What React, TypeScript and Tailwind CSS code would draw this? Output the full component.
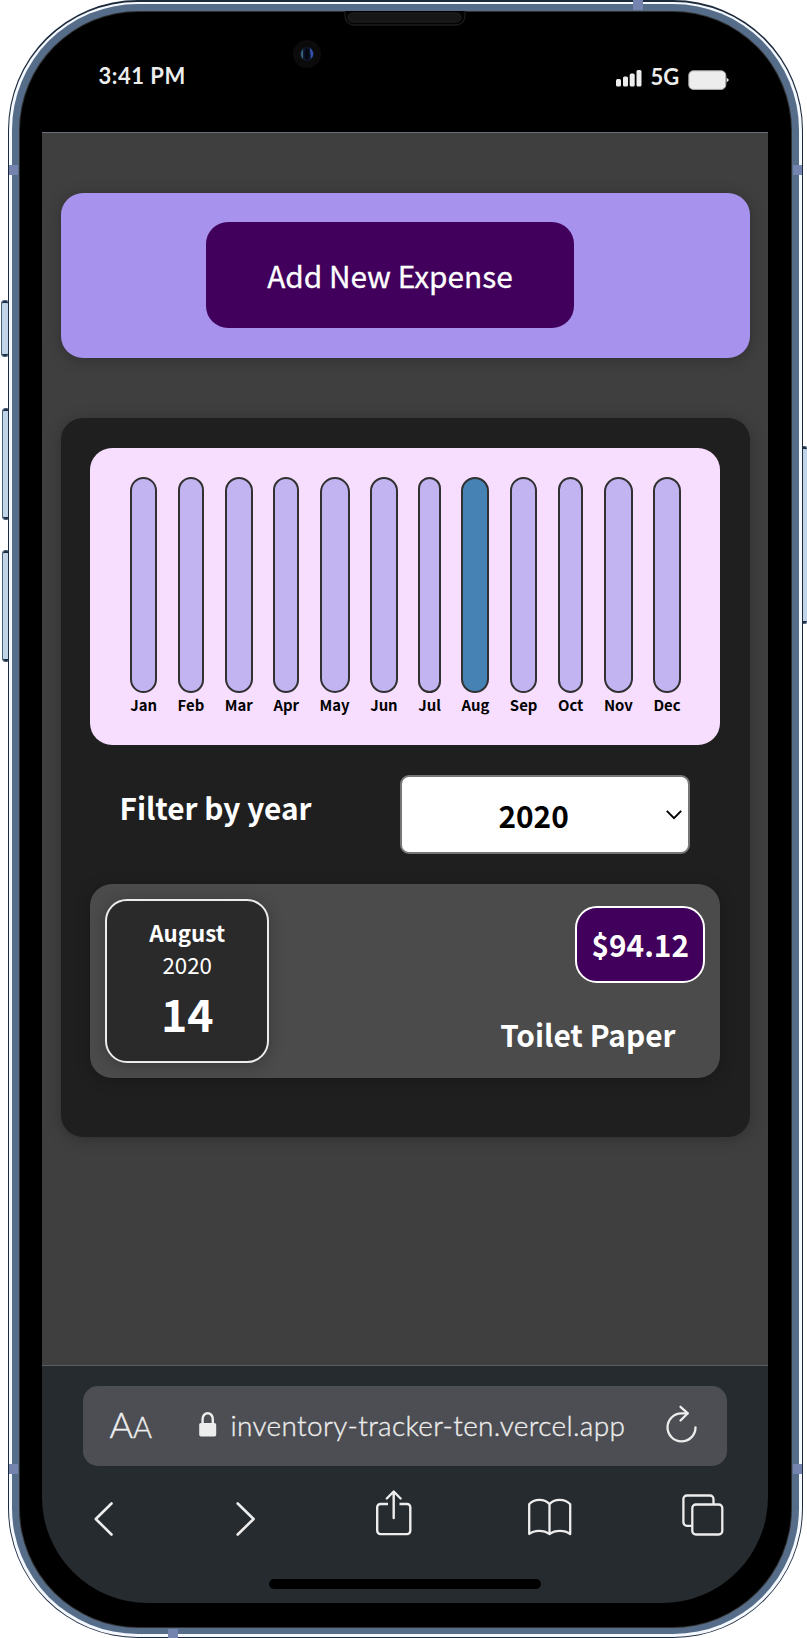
import React from "react";

const months = ["Jan", "Feb", "Mar", "Apr", "May", "Jun", "Jul", "Aug", "Sep", "Oct", "Nov", "Dec"];

function SideButton({ className }: { className: string }) {
  return (
    <div
      className={`absolute w-[8px] rounded-[3px] border-[1.5px] border-[#4a5f78] bg-[#c2d5e8] shadow-[inset_0_4px_0_-2px_#1d2d42,inset_0_-4px_0_-2px_#1d2d42] ${className}`}
    />
  );
}

function Antenna({ className }: { className: string }) {
  return <div className={`absolute bg-[#7484ae] ${className}`} />;
}

function StatusBar() {
  return (
    <div className="flex h-[120px] shrink-0 items-start justify-between pl-[56px] pr-[39px] font-['Lato','Liberation_Sans',sans-serif] text-[#ededed]">
      <div className="mt-[50px] whitespace-nowrap text-[22px] font-bold leading-[28px] tracking-[0.5px]">3:41 PM</div>
      <div className="mt-[50px] flex items-start">
        <svg width="26" height="17" viewBox="0 0 26 17" className="mt-[8px]" fill="#ededed">
          <rect x="0" y="9" width="5" height="7.5" rx="1.5" />
          <rect x="7" y="6.5" width="5" height="10" rx="1.5" />
          <rect x="13.7" y="3.5" width="5" height="13" rx="1.5" />
          <rect x="20.5" y="0" width="5" height="16.5" rx="1.5" />
        </svg>
        <div className="ml-[9px] mt-[1px] w-[29px] whitespace-nowrap text-[22px] font-bold leading-[28px]">5G</div>
        <svg width="41" height="21" viewBox="0 0 41 21" className="ml-[8px] mt-[8px]">
          <rect x="0.8" y="0.8" width="37" height="18.6" rx="4.5" fill="#ededed" stroke="#aaa" strokeWidth="1" />
          <path d="M38.6 7.5 L41 10 L38.6 12.6Z" fill="#ededed" />
        </svg>
      </div>
    </div>
  );
}

function Chart() {
  return (
    <div className="flex h-[297.5px] justify-between rounded-[22px] bg-[#f7deff] px-[39.8px] pt-[29.5px]">
      {months.map((m) => (
        <div key={m} className="flex flex-col items-center">
          <div
            className={`h-[216px] w-full rounded-[22px] border-2 border-[#313131] ${m === "Aug" ? "bg-[#4682b4]" : "bg-[#c2b3f1]"}`}
          />
          <div className="mt-[1px] text-[14.9px] font-bold leading-[22px] text-black">{m}</div>
        </div>
      ))}
    </div>
  );
}

function Filter() {
  return (
    <div className="mt-[30px] flex h-[79px] items-start justify-between pl-[29px] pr-[30px]">
      <div className="mt-[10px] text-[29.8px] font-bold leading-[44px] text-white">Filter by year</div>
      <div className="flex h-[79px] w-[290px] items-center rounded-[9px] border-2 border-[#767676] bg-white pr-[5px]">
        <div className="ml-[96px] text-[29.8px] font-bold leading-[44px] text-black">2020</div>
        <svg width="16" height="10" viewBox="0 0 16 10" className="ml-auto mr-[1px]" fill="none" stroke="#000" strokeWidth="1.9">
          <path d="M0.8 0.8 L8 8.2 L15.2 0.8" />
        </svg>
      </div>
    </div>
  );
}

function ExpenseItem() {
  return (
    <div className="mt-[30px] flex h-[193.5px] items-start justify-between rounded-[22px] bg-[#4b4b4b] p-[15px] shadow-[0_2px_15px_rgba(0,0,0,0.25)]">
      <div className="flex h-[163.5px] w-[163.5px] flex-col items-center rounded-[22px] border-2 border-[#ececec] bg-[#2a2a2a] text-white shadow-[0_2px_15px_rgba(0,0,0,0.25)]">
        <div className="mt-[15px] text-[22.3px] font-bold leading-[32px]">August</div>
        <div className="text-[22.3px] leading-[32px]">2020</div>
        <div className="mt-px text-[44.6px] font-bold leading-[64px]">14</div>
      </div>
      <div className="flex flex-col items-end">
        <div className="mt-[7px] flex h-[76.5px] w-[130.5px] items-center justify-center rounded-[22px] border-2 border-white bg-[#40005c] pb-px text-[29.8px] font-bold leading-[44px] text-white">
          $94.12
        </div>
        <div className="mr-[30px] mt-[29px] text-[29.8px] font-bold leading-[44px] text-white">Toilet Paper</div>
      </div>
    </div>
  );
}

function WebPage() {
  return (
    <div className="h-[1233px] shrink-0 overflow-hidden border-t border-[#6a707b] bg-[#3f3f3f] pl-[18.2px] pr-[17.3px] pt-[59.7px] font-['Noto_Sans_CJK_JP',sans-serif]">
      <div className="flex h-[165.5px] rounded-[22px] bg-[#a793ed] pl-[145px] pt-[29.7px] shadow-[0_2px_15px_rgba(0,0,0,0.25)]">
        <div className="flex h-[106px] w-[368.5px] items-center justify-center rounded-[22px] bg-[#40005c] text-[29.8px] leading-[44px] text-white [-webkit-text-stroke:0.3px_white]">
          Add New Expense
        </div>
      </div>
      <div className="mt-[59.5px] h-[719.5px] rounded-[22px] bg-[#1f1f1f] px-[29.8px] pt-[30px] shadow-[0_2px_15px_rgba(0,0,0,0.25)]">
        <Chart />
        <Filter />
        <ExpenseItem />
      </div>
    </div>
  );
}

function BrowserBar() {
  return (
    <div className="h-[238px] shrink-0 overflow-hidden rounded-b-[106px] border-t border-[#5a5e62] bg-[#262b2f] font-['Lato','Liberation_Sans',sans-serif] text-[#ededed]">
      <div className="ml-[41px] mt-[20px] flex h-[80px] w-[643.5px] items-start rounded-[15px] bg-[#4c4e53] pl-[26px]">
        <div className="mt-[14px] flex w-[46px] items-baseline whitespace-nowrap font-light leading-[48px] [-webkit-text-stroke:0.4px_#ededed]">
          <span className="text-[36px]">A</span>
          <span className="text-[29px]">A</span>
        </div>
        <svg width="18" height="25" viewBox="0 0 18 25" className="ml-[44px] mt-[26px]">
          <rect x="0.2" y="11" width="17" height="13.5" rx="1.8" fill="#ededed" />
          <path d="M3.6 12 V7 a5.1 5.8 0 0 1 10.2 0 V12" fill="none" stroke="#ededed" strokeWidth="2.4" />
        </svg>
        <div className="ml-[13px] mt-[21px] w-[395px] whitespace-nowrap text-[28px] font-light leading-[36px] tracking-[0.34px] [-webkit-text-stroke:0.35px_#ededed]">
          inventory-tracker-ten.vercel.app
        </div>
        <svg width="32" height="39" viewBox="0 0 32 39" className="ml-[41px] mt-[19px]" fill="none" stroke="#ededed" strokeWidth="2.3" strokeLinecap="round" strokeLinejoin="round">
          <path d="M21.5 8.4 H15.5 A14 14 0 1 0 29.5 22.5" />
          <path d="M14.5 1.8 L21.8 8.3 L14.5 15.5" />
        </svg>
      </div>
      <div className="mt-[22px] flex h-[48px] items-end pl-[52px]">
        <svg width="20" height="34" viewBox="0 0 20 34" fill="none" stroke="#ededed" strokeWidth="2.6" strokeLinecap="round" strokeLinejoin="round">
          <path d="M17.5 1.5 L1.8 17 L17.5 32.5" />
        </svg>
        <svg width="20" height="34" viewBox="0 0 20 34" className="ml-[122px]" fill="none" stroke="#ededed" strokeWidth="2.6" strokeLinecap="round" strokeLinejoin="round">
          <path d="M1.7 1.5 L17.6 17 L1.7 32.5" />
        </svg>
        <svg width="36" height="46" viewBox="0 0 36 46" className="ml-[120px]" fill="none" stroke="#ededed" strokeWidth="2.4" strokeLinecap="round" strokeLinejoin="round">
          <path d="M12 14 H4.5 a3.3 3.3 0 0 0 -3.3 3.3 V40.8 a3.3 3.3 0 0 0 3.3 3.3 H31 a3.3 3.3 0 0 0 3.3 -3.3 V17.3 a3.3 3.3 0 0 0 -3.3 -3.3 H23.5" strokeLinecap="butt" />
          <path d="M17.7 28 V1.8 M10.8 8.5 L17.7 1.5 L24.6 8.5" />
        </svg>
        <svg width="45" height="38" viewBox="0 0 45 38" className="ml-[114.5px]" fill="none" stroke="#ededed" strokeWidth="2.3" strokeLinejoin="round">
          <path d="M22.5 6.3 C18 0.4 7 0.4 2.2 6.3 V36 C7 31.7 17 31.7 22.5 36 C28 31.7 38 31.7 43.2 36 V6.3 C38 0.4 27 0.4 22.5 6.3 Z M22.5 6.3 V36" />
        </svg>
        <svg width="42" height="42" viewBox="0 0 42 42" className="ml-[110.5px]" fill="none" stroke="#ededed" strokeWidth="2.3">
          <rect x="10.3" y="10.5" width="30" height="30" rx="3.6" />
          <path d="M10 31.8 H4.9 a3.5 3.5 0 0 1 -3.5 -3.5 V5 a3.5 3.5 0 0 1 3.5 -3.5 H28 a3.5 3.5 0 0 1 3.5 3.5 V10" />
        </svg>
      </div>
      <div className="ml-[227px] mt-[43.5px] h-[10px] w-[271.5px] rounded-full bg-black" />
    </div>
  );
}

export default function App() {
  return (
    <div className="relative h-[1638px] w-[807px] overflow-hidden bg-white">
      <SideButton className="left-[1px] top-[300px] h-[57px]" />
      <SideButton className="left-[2px] top-[408px] h-[112px]" />
      <SideButton className="left-[2px] top-[550px] h-[112px]" />
      <SideButton className="left-[800px] top-[446px] h-[178px]" />
      <div className="relative ml-[8px] h-[1638px] w-[795px] rounded-[130px] bg-[#1d2a3c] px-[1.4px] pb-[1px] pt-[1.5px]">
        <div className="h-full rounded-[128.5px] bg-[#f4f8ff] p-[2.9px]">
          <div className="h-full rounded-[125.8px] bg-[#566d8a] p-[6.3px]">
            <div className="h-full rounded-[119.5px] bg-[#303030] p-[1.3px]">
              <div className="flex h-full flex-col rounded-[118.5px] bg-black pl-[22.6px] pr-[23.6px]">
                <StatusBar />
                <WebPage />
                <BrowserBar />
              </div>
            </div>
          </div>
        </div>
      </div>
      <Antenna className="left-[9px] top-[165px] h-[10px] w-[9px]" />
      <Antenna className="left-[793px] top-[165px] h-[10px] w-[9px]" />
      <Antenna className="left-[9px] top-[1464px] h-[10px] w-[9px]" />
      <Antenna className="left-[793px] top-[1464px] h-[10px] w-[9px]" />
      <Antenna className="left-[633px] top-0 h-[10px] w-[10px]" />
      <Antenna className="left-[168px] top-[1629px] h-[9px] w-[10px]" />
      <svg width="124" height="20" viewBox="0 0 124 20" className="absolute left-[343px] top-[10px]">
        <path d="M2 1 V6 a9 9 0 0 0 9 9 H113 a9 9 0 0 0 9 -9 V1" fill="#030303" stroke="#1c1c1c" strokeWidth="1.3" />
        <rect x="5" y="3" width="113" height="9" rx="4.5" fill="#151615" stroke="#222" />
      </svg>
      <svg width="30" height="30" viewBox="0 0 30 30" className="absolute left-[292px] top-[39px]">
        <circle cx="15" cy="15" r="14" fill="#0b0b0c" />
        <circle cx="15" cy="15" r="7" fill="#101a2c" />
        <path d="M11 10 a7 7 0 0 0 0 10 Z" fill="#37647a" />
        <path d="M18 9 a7 7 0 0 1 1 11 Z" fill="#3453b4" />
        <ellipse cx="15" cy="15" rx="2.6" ry="6" fill="#050916" />
      </svg>
    </div>
  );
}
